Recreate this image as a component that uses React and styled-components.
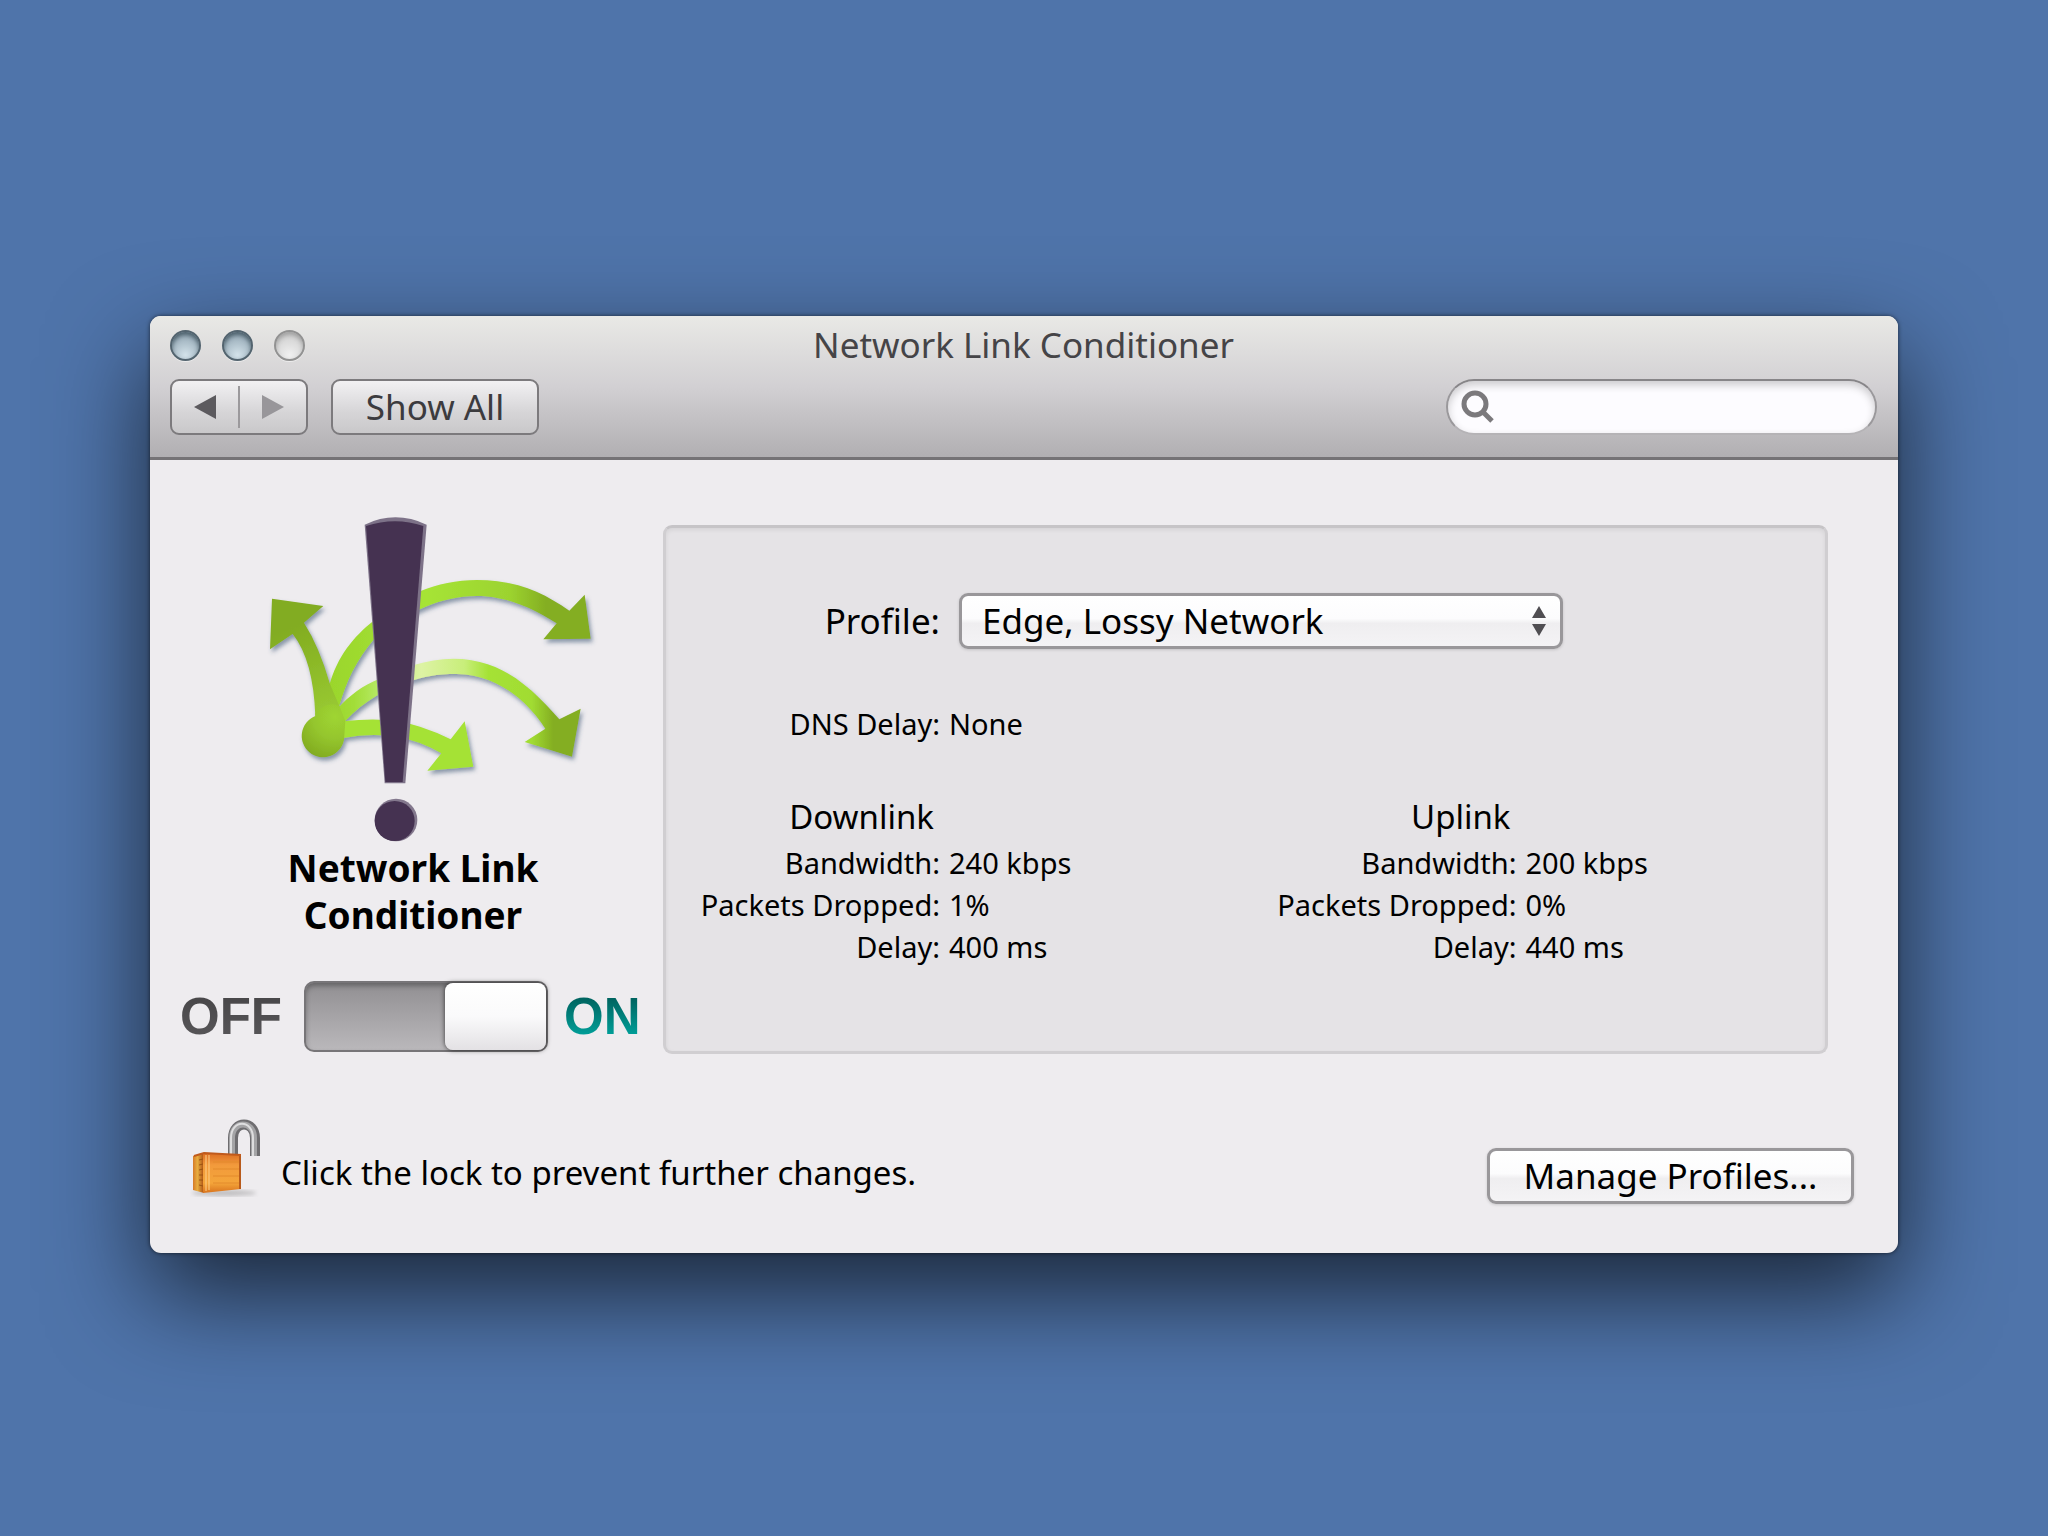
import { useState } from 'react';
import styled, { createGlobalStyle } from 'styled-components';

const GlobalStyle = createGlobalStyle`
  * {
    box-sizing: border-box;
  }

  body {
    margin: 0;
    background-color: #4f74aa;
  }

  body,
  button,
  input,
  select {
    font-family: 'Noto Sans', 'Open Sans', sans-serif;
  }

  h1,
  h2,
  h3,
  p,
  dl,
  dd {
    margin: 0;
    font-weight: 400;
  }

  button {
    padding: 0;
    cursor: pointer;
  }
`;

const Desktop = styled.div`
  min-height: 100vh;
  padding: 316px 150px;
`;

const Window = styled.main`
  border-radius: 11px;
  background-color: #eeecef;
  box-shadow:
    0 0 4px rgba(0, 0, 0, 0.6),
    0 40px 100px rgba(0, 0, 0, 0.68);
`;

const Header = styled.header`
  padding: 0 21px 22px 20px;
  border-bottom: 3px solid #757376;
  border-radius: 11px 11px 0 0;
  background: linear-gradient(#e9e9e6, #d2d0d3 50%, #b1afb2);
`;

const TitleBar = styled.div`
  height: 58px;
  margin-bottom: 5px;
  display: grid;
  grid-template-columns: 1fr auto 1fr;
  align-items: center;
`;

const Lights = styled.div`
  display: flex;
  gap: 21px;
`;

const Light = styled.button`
  width: 31px;
  height: 31px;
  border: 2px solid ${({ $off }) => ($off ? '#929292' : '#53646f')};
  border-radius: 50%;
  background: ${({ $off }) =>
    $off
      ? 'radial-gradient(circle at 50% 85%, #f0f0f0, #cfcfcf 80%)'
      : 'radial-gradient(circle at 50% 85%, #d3e2ea, #93a7b4 80%)'};
  box-shadow:
    inset 0 3px 4px ${({ $off }) => ($off ? 'rgba(60, 60, 60, 0.3)' : 'rgba(30, 50, 60, 0.6)')},
    0 1px 0 rgba(255, 255, 255, 0.5);
`;

const WindowTitle = styled.h1`
  font-size: 35px;
  line-height: 48px;
  color: #454447;
`;

const Toolbar = styled.div`
  display: flex;
  align-items: center;
  gap: 23px;
`;

const toolbarControl = `
  height: 56px;
  border: 2px solid #7c7a7d;
  border-radius: 9px;
  background: linear-gradient(#f2f1f3, #d6d5d7 60%, #c9c8ca);
`;

const NavGroup = styled.div`
  ${toolbarControl}
  width: 138px;
  padding: 5px 0;
  display: flex;
`;

const NavButton = styled.button`
  flex: 1;
  display: flex;
  align-items: center;
  justify-content: center;
  border: none;
  background: none;
  color: ${({ $dim }) => ($dim ? '#98969a' : '#5c5a5e')};

  & + & {
    border-left: 2px solid #9b999c;
  }
`;

const ShowAllButton = styled.button`
  ${toolbarControl}
  width: 208px;
  font-size: 35px;
  line-height: 48px;
  color: #3c3b3e;
`;

const SearchField = styled.label`
  width: 431px;
  height: 56px;
  margin-left: auto;
  padding: 0 20px 0 13px;
  display: flex;
  align-items: center;
  gap: 10px;
  border: 2px solid #9a989b;
  border-top-color: #878588;
  border-bottom-color: #b5b3b6;
  border-radius: 28px;
  background-color: #fdfcff;
  box-shadow: inset 0 4px 8px rgba(0, 0, 0, 0.2);
`;

const SearchInput = styled.input`
  flex: 1;
  min-width: 0;
  border: none;
  outline: none;
  background: none;
  font-size: 33px;
`;

const Body = styled.div`
  padding: 56px 70px 0 30px;
  display: flex;
  align-items: flex-start;
  gap: 17px;
`;

const Side = styled.section`
  width: 466px;
  flex-shrink: 0;
  display: flex;
  flex-direction: column;
  align-items: center;
`;

const PaneName = styled.h2`
  max-width: 300px;
  font-size: 37px;
  font-weight: 700;
  line-height: 47px;
  text-align: center;
  color: #000;
`;

const SwitchLabel = styled.label`
  width: 100%;
  margin-top: 43px;
  display: flex;
  align-items: center;
  gap: 16px;
`;

const SwitchText = styled.span`
  min-width: ${({ $on }) => ($on ? '78px' : '108px')};
  font-family: 'Liberation Sans', sans-serif;
  font-size: 51px;
  font-weight: 700;
  line-height: 60px;
  color: transparent;
  background: ${({ $on }) =>
    $on ? 'linear-gradient(#006561 20%, #009e98 80%)' : 'linear-gradient(#454446, #5a585b)'};
  background-clip: text;
`;

const Switch = styled.input`
  appearance: none;
  width: 244px;
  height: 71px;
  margin: 0;
  display: flex;
  justify-content: ${({ checked }) => (checked ? 'flex-end' : 'flex-start')};
  border: 2px solid #777578;
  border-radius: 10px;
  background: linear-gradient(#918f92, #bab8bb);
  box-shadow: inset 0 3px 5px rgba(0, 0, 0, 0.3);

  &::before {
    content: '';
    width: 101px;
    height: 67px;
    border-radius: 8px;
    background: linear-gradient(#fff, #fafafb 50%, #e3e1e4);
    box-shadow: 0 0 5px rgba(0, 0, 0, 0.7);
  }
`;

const Panel = styled.section`
  flex: 1;
  margin-top: 9px;
  padding: 65px 6px 83px 0;
  border: 3px solid #d0ced1;
  border-top-color: #c6c4c7;
  border-radius: 9px;
  background-color: #e5e3e6;
  box-shadow: inset 0 2px 4px rgba(0, 0, 0, 0.07);
  color: #000;
`;

const ProfileRow = styled.div`
  display: grid;
  grid-template-columns: 274px 604px;
  align-items: center;
  gap: 19px;
`;

const ProfileLabel = styled.label`
  font-size: 35px;
  line-height: 48px;
  text-align: right;
`;

const SelectBox = styled.div`
  position: relative;
`;

const pushControl = `
  height: 56px;
  border: 3px solid #99979a;
  border-radius: 9px;
  background: linear-gradient(#fff, #fcfcfd 45%, #efeef0 55%, #f4f3f5);
  box-shadow: 0 1px 3px rgba(0, 0, 0, 0.15);
  color: #000;
`;

const Select = styled.select`
  ${pushControl}
  appearance: none;
  width: 100%;
  padding: 0 60px 0 20px;
  font-size: 35px;
  line-height: 48px;
`;

const SelectArrows = styled.svg`
  position: absolute;
  top: 13px;
  right: 16px;
  pointer-events: none;
`;

const Stats = styled.dl`
  display: grid;
  grid-template-columns: 274px 1fr;
  column-gap: 9px;
  font-size: 29px;
  line-height: 42px;

  dt {
    text-align: right;
  }
`;

const DnsStats = styled(Stats)`
  margin: 54px 0 47px;
`;

const Links = styled.div`
  display: grid;
  grid-template-columns: 1fr 1fr;
`;

const LinkTitle = styled.h3`
  width: 268px;
  font-size: 33px;
  line-height: 50px;
  text-align: right;
`;

const Footer = styled.footer`
  margin-top: 63px;
  padding: 0 44px 49px 40px;
  display: flex;
  align-items: flex-end;
  gap: 16px;
`;

const LockButton = styled.button`
  display: flex;
  border: none;
  background: none;
`;

const LockHint = styled.p`
  padding-bottom: 9px;
  font-size: 33px;
  line-height: 44px;
  color: #000;
`;

const ManageButton = styled.button`
  ${pushControl}
  width: 367px;
  margin-left: auto;
  font-size: 35px;
  line-height: 48px;
`;

const profiles = ['Edge, Lossy Network', 'Edge, Good Connectivity', '3G, Average Case', 'WiFi'];

const links = [
  {
    name: 'Downlink',
    stats: [
      ['Bandwidth', '240 kbps'],
      ['Packets Dropped', '1%'],
      ['Delay', '400 ms'],
    ],
  },
  {
    name: 'Uplink',
    stats: [
      ['Bandwidth', '200 kbps'],
      ['Packets Dropped', '0%'],
      ['Delay', '440 ms'],
    ],
  },
];

function SearchIcon() {
  return (
    <svg width="34" height="34" viewBox="0 0 34 34" fill="none" stroke="#7b797c" aria-hidden="true">
      <circle cx="14" cy="14" r="11" strokeWidth="5" />
      <path d="M22 22l9 9" strokeWidth="5" />
    </svg>
  );
}

function ConditionerLogo() {
  return (
    <svg width="378" height="328" viewBox="-78 48 1134 984" aria-hidden="true">
      <defs>
        <linearGradient id="middle" gradientUnits="userSpaceOnUse" x1="240" y1="0" x2="960" y2="0">
          <stop offset="0" stopColor="#9bd62c" />
          <stop offset="0.1" stopColor="#a2dd38" />
          <stop offset="0.2" stopColor="#b5e963" />
          <stop offset="0.38" stopColor="#ddf3a4" />
          <stop offset="0.56" stopColor="#c8ee7a" />
          <stop offset="0.66" stopColor="#a5e236" />
          <stop offset="0.84" stopColor="#a1dc32" />
          <stop offset="0.93" stopColor="#84ae22" />
        </linearGradient>
        <linearGradient id="upper" gradientUnits="userSpaceOnUse" x1="240" y1="0" x2="960" y2="0">
          <stop offset="0" stopColor="#9bd62c" />
          <stop offset="0.4" stopColor="#a6e436" />
          <stop offset="0.75" stopColor="#9cd32f" />
          <stop offset="0.9" stopColor="#84ae22" />
        </linearGradient>
        <linearGradient id="left" gradientUnits="userSpaceOnUse" x1="130" y1="380" x2="240" y2="660">
          <stop offset="0" stopColor="#82ac20" />
          <stop offset="1" stopColor="#9acb33" />
        </linearGradient>
        <radialGradient id="hub" gradientUnits="userSpaceOnUse" cx="255" cy="650" r="130">
          <stop offset="0" stopColor="#9fd531" />
          <stop offset="0.5" stopColor="#95c62e" />
          <stop offset="1" stopColor="#82ac20" />
        </radialGradient>
        <filter id="drop" x="-10%" y="-10%" width="120%" height="130%">
          <feDropShadow dx="6" dy="10" stdDeviation="7" floodColor="#34506e" floodOpacity="0.55" />
        </filter>
      </defs>
      <g filter="url(#drop)">
        <path
          d="M280 664Q420 648 510 680Q560 696 602 718L644 664L670 800L532 812L574 760Q510 722 440 710Q360 698 280 714z"
          fill="#a5e236"
        />
        <path
          d="M262 626C300 585 340 556 385 538C450 505 530 476 610 476C760 476 850 570 928 658L992 626L966 770L824 726L886 686C830 600 740 524 620 522C560 522 520 530 480 544C410 566 345 600 285 664z"
          fill="url(#middle)"
        />
        <path
          d="M238 556C262 470 310 410 370 363C450 290 560 240 680 240C800 240 880 278 958 332L1004 284L1022 416L880 418L920 370C850 326 770 288 680 288C570 290 480 330 372 418C320 480 290 540 266 624z"
          fill="url(#upper)"
        />
        <path
          d="M66 296L220 318L162 368Q208 440 240 552L268 618L284 664L196 648Q190 480 128 402L60 448z"
          fill="url(#left)"
        />
        <path d="M196 640Q232 600 268 618L286 664L282 720A64 64 0 1 1 196 648z" fill="url(#hub)" />
      </g>
      <path d="M344 74Q436 30 530 74L466 850H404z" fill="#7d7288" />
      <path d="M348 78Q436 50 520 78L458 846H406z" fill="#453251" />
      <circle cx="438" cy="960" r="64" fill="#83788d" />
      <circle cx="434" cy="963" r="60" fill="#453251" />
    </svg>
  );
}

function LockIcon() {
  return (
    <svg width="75" height="87" viewBox="0 0 75 87" aria-hidden="true">
      <defs>
        <linearGradient id="front" x1="0" y1="0" x2="0" y2="1">
          <stop offset="0" stopColor="#dc6d22" />
          <stop offset="0.3" stopColor="#f29a3c" />
          <stop offset="0.75" stopColor="#f4a53a" />
          <stop offset="1" stopColor="#d9731d" />
        </linearGradient>
        <linearGradient id="edge" x1="0" y1="0" x2="1" y2="0">
          <stop offset="0" stopColor="#d57a28" />
          <stop offset="0.4" stopColor="#e8ad3e" />
          <stop offset="1" stopColor="#a94b12" />
        </linearGradient>
        <filter id="soft">
          <feGaussianBlur stdDeviation="2" />
        </filter>
      </defs>
      <ellipse cx="34" cy="76" rx="32" ry="3" fill="#777" opacity="0.4" filter="url(#soft)" />
      <path d="M43 40V21c0-18 22-18 22 0v18" fill="none" stroke="#6e6d70" strokeWidth="10" />
      <path d="M42 40V21c0-18 22-18 22 0v18" fill="none" stroke="#a4a4a6" strokeWidth="6" />
      <path d="M41 40V21c0-19 22-19 22 0v18" fill="none" stroke="#dededf" strokeWidth="2" />
      <path d="M3 39l11-3v40L3 73z" fill="url(#edge)" />
      <path d="M9 43l4-1M9 48l4-1M9 53l4-1M9 58h4M9 63h4M9 68l4 1" stroke="#9a5311" strokeWidth="1" />
      <path d="M13 36l38 2v34l-38 4z" fill="url(#front)" />
      <path d="M16 38v36M19 38v35" stroke="#ffd08a" strokeWidth="1" />
      <path d="M23 45h26M23 52h26M23 59h26M23 66h26" stroke="#e38a2c" strokeWidth="1" />
      <path d="M4 39l10-3 37 2" fill="none" stroke="#c05a1c" strokeWidth="2" />
      <path d="M50 39v33" stroke="#b85a1b" strokeWidth="2" />
    </svg>
  );
}

function StatList({ as: List = Stats, stats }) {
  return (
    <List>
      {stats.map(([label, value]) => (
        <StatItem key={label} label={label} value={value} />
      ))}
    </List>
  );
}

function StatItem({ label, value }) {
  return (
    <>
      <dt>{label}:</dt>
      <dd>{value}</dd>
    </>
  );
}

function App() {
  const [enabled, setEnabled] = useState(true);
  const [profile, setProfile] = useState(profiles[0]);

  return (
    <>
      <GlobalStyle />
      <Desktop>
        <Window>
          <Header>
            <TitleBar>
              <Lights>
                <Light type="button" aria-label="Close" />
                <Light type="button" aria-label="Minimize" />
                <Light type="button" aria-label="Zoom" $off />
              </Lights>
              <WindowTitle>Network Link Conditioner</WindowTitle>
            </TitleBar>
            <Toolbar>
              <NavGroup>
                <NavButton type="button" aria-label="Back">
                  <svg width="22" height="24" viewBox="0 0 22 24" fill="currentColor">
                    <path d="M22 0v24L0 12z" />
                  </svg>
                </NavButton>
                <NavButton type="button" aria-label="Forward" $dim>
                  <svg width="22" height="24" viewBox="0 0 22 24" fill="currentColor">
                    <path d="M0 0v24l22-12z" />
                  </svg>
                </NavButton>
              </NavGroup>
              <ShowAllButton type="button">Show All</ShowAllButton>
              <SearchField>
                <SearchIcon />
                <SearchInput type="text" aria-label="Search" />
              </SearchField>
            </Toolbar>
          </Header>

          <Body>
            <Side>
              <ConditionerLogo />
              <PaneName>Network Link Conditioner</PaneName>
              <SwitchLabel>
                <SwitchText>OFF</SwitchText>
                <Switch
                  type="checkbox"
                  role="switch"
                  checked={enabled}
                  onChange={(e) => setEnabled(e.target.checked)}
                />
                <SwitchText $on>ON</SwitchText>
              </SwitchLabel>
            </Side>

            <Panel>
              <ProfileRow>
                <ProfileLabel htmlFor="profile">Profile:</ProfileLabel>
                <SelectBox>
                  <Select id="profile" value={profile} onChange={(e) => setProfile(e.target.value)}>
                    {profiles.map((name) => (
                      <option key={name}>{name}</option>
                    ))}
                  </Select>
                  <SelectArrows width="16" height="30" viewBox="0 0 16 30" fill="#504e52">
                    <path d="M8 0l7 12H1zM8 30l7-12H1z" />
                  </SelectArrows>
                </SelectBox>
              </ProfileRow>
              <StatList as={DnsStats} stats={[['DNS Delay', 'None']]} />
              <Links>
                {links.map(({ name, stats }) => (
                  <div key={name}>
                    <LinkTitle>{name}</LinkTitle>
                    <StatList stats={stats} />
                  </div>
                ))}
              </Links>
            </Panel>
          </Body>

          <Footer>
            <LockButton type="button" aria-label="Lock">
              <LockIcon />
            </LockButton>
            <LockHint>Click the lock to prevent further changes.</LockHint>
            <ManageButton type="button">Manage Profiles...</ManageButton>
          </Footer>
        </Window>
      </Desktop>
    </>
  );
}

export default App;
